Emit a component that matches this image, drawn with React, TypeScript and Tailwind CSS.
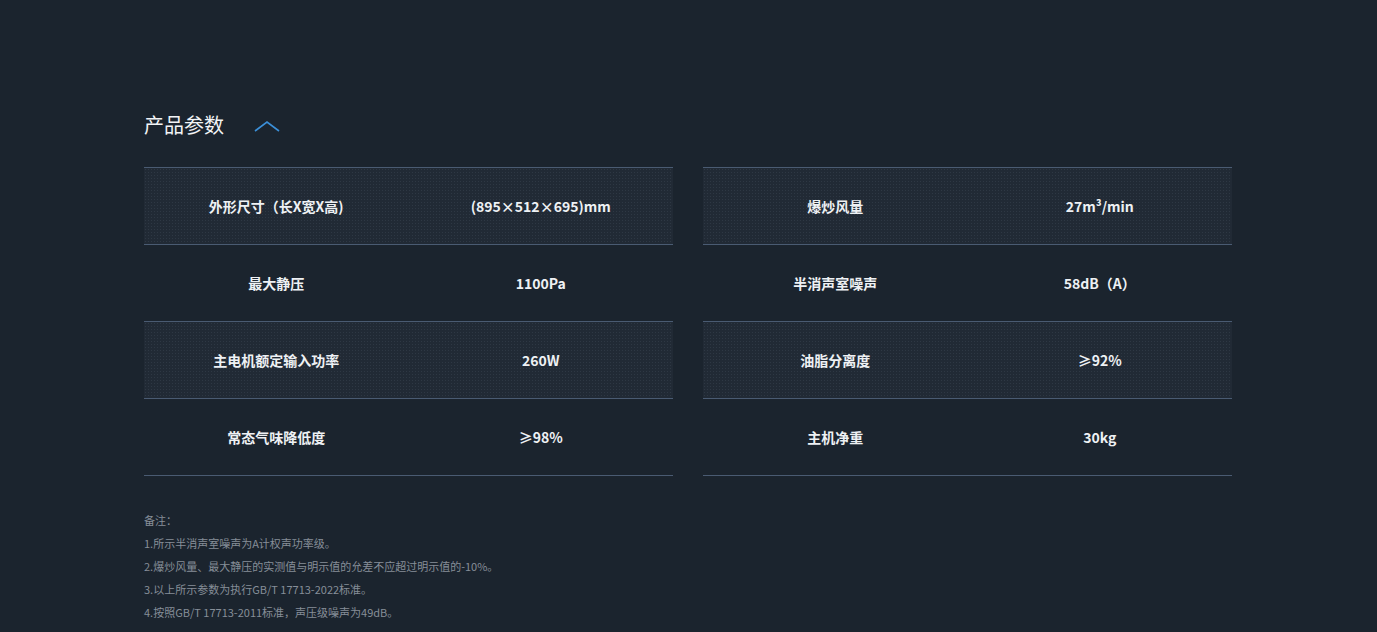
const font = { fontFamily: '"Noto Sans CJK SC", "Noto Sans", sans-serif' };

const left = [
  ["外形尺寸（长X宽X高)", "(895×512×695)mm"],
  ["最大静压", "1100Pa"],
  ["主电机额定输入功率", "260W"],
  ["常态气味降低度", "≥98%"],
];
const right = [
  ["爆炒风量", "27m³/min"],
  ["半消声室噪声", "58dB（A）"],
  ["油脂分离度", "≥92%"],
  ["主机净重", "30kg"],
];

function Table({ rows }: { rows: string[][] }) {
  return (
    <div className="w-[529px] border-t border-[#4a5b72]">
      {rows.map(([k, v], i) => (
        <div
          key={k}
          className={`grid grid-cols-2 h-[77px] items-center border-b border-[#4a5b72] text-[14px] font-bold text-[#eef1f4] text-center ${
            i % 2 === 0
              ? "bg-[#212a35] bg-[radial-gradient(#2e3844_1px,transparent_1px)] bg-[size:3px_3px]"
              : ""
          }`}
        >
          <div>{k}</div>
          <div>{v}</div>
        </div>
      ))}
    </div>
  );
}

export default function App() {
  return (
    <div className="w-[1377px] h-[632px] bg-[#1b242e] overflow-hidden" style={font}>
      <div className="pl-[144px] pt-[111px]">
        <div className="flex items-center h-[28px]">
          <span className="text-[20px] text-[#f2f4f6]">产品参数</span>
          <svg className="ml-[30px] mt-[2px]" width="26" height="12" viewBox="0 0 26 12">
            <path d="M1 11 L13 2 L25 11" fill="none" stroke="#3b8fd8" strokeWidth="1.6" />
          </svg>
        </div>
        <div className="flex gap-[30px] mt-[28px]">
          <Table rows={left} />
          <Table rows={right} />
        </div>
        <div className="mt-[33px] text-[11px] leading-[23px] text-[#868e98]">
          <p>备注：</p>
          <p>1.所示半消声室噪声为A计权声功率级。</p>
          <p>2.爆炒风量、最大静压的实测值与明示值的允差不应超过明示值的-10%。</p>
          <p>3.以上所示参数为执行GB/T 17713-2022标准。</p>
          <p>4.按照GB/T 17713-2011标准，声压级噪声为49dB。</p>
        </div>
      </div>
    </div>
  );
}
